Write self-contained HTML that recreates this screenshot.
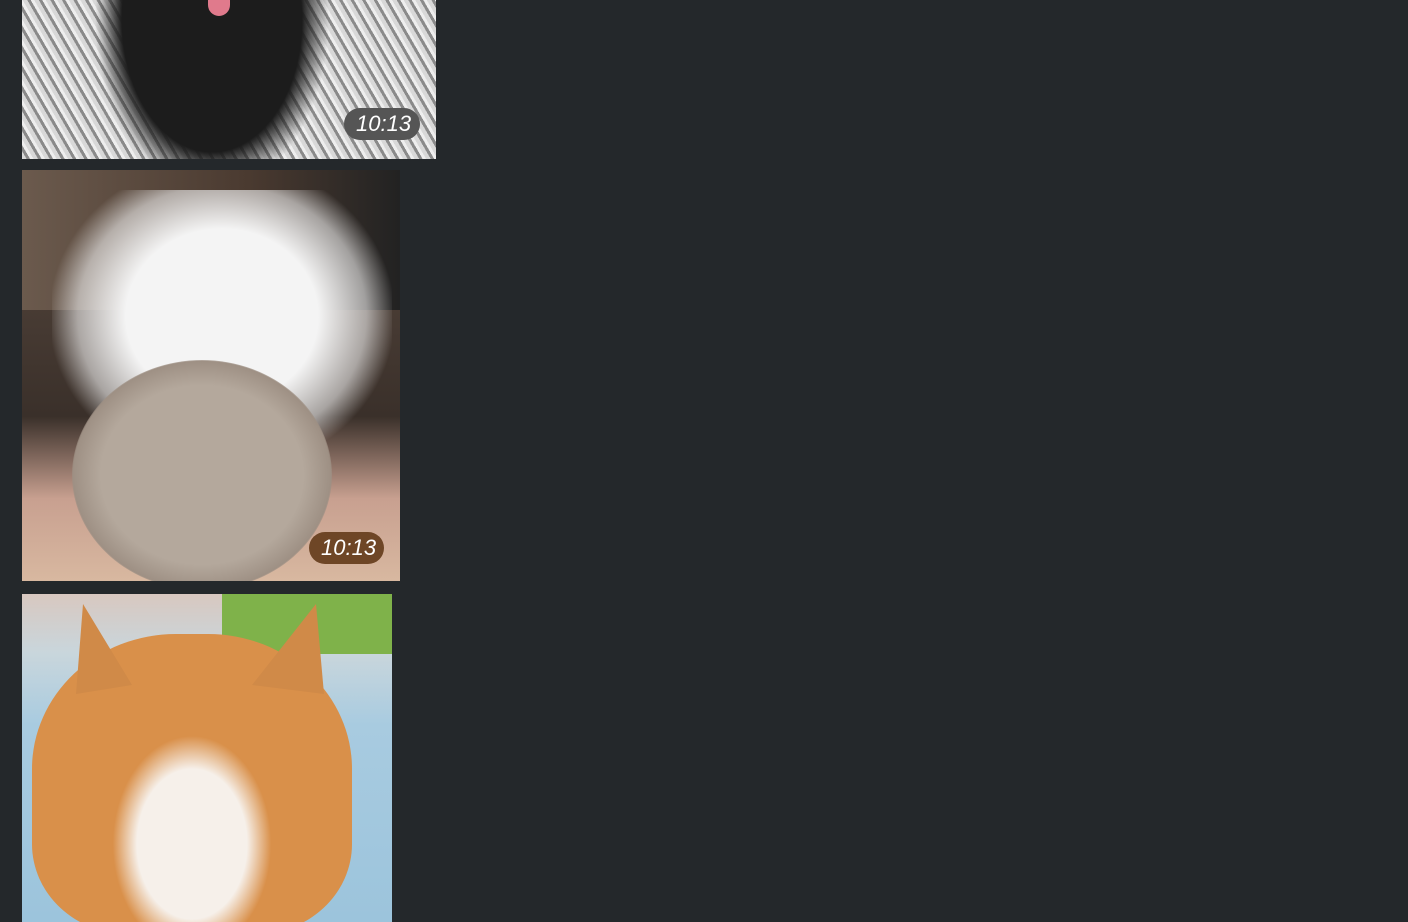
<!DOCTYPE html>
<html><head><meta charset="utf-8"><style>
body{margin:0;width:1408px;height:922px;overflow:hidden;background:#24282b;font-family:"Liberation Sans",sans-serif;position:relative}
.img{position:absolute;left:22px;overflow:hidden}
.t{position:absolute;height:32px;border-radius:16px;color:#fff;font-style:italic;font-size:22px;line-height:32px;padding:0 12px;box-sizing:border-box}
</style></head><body>
<div class="img" style="top:0;width:414px;height:159px;background:radial-gradient(ellipse 150px 220px at 190px 20px,#1c1c1c 60%,transparent 78%),repeating-linear-gradient(60deg,#d8d8d8 0 4px,#8a8a8a 4px 7px,#eee 7px 10px)">
<div style="position:absolute;left:186px;top:0;width:22px;height:16px;background:#e07a8c;border-radius:0 0 11px 11px"></div>
<div class="t" style="left:322px;top:108px;width:76px;background:#555">10:13</div></div>
<div class="img" style="top:170px;width:378px;height:411px;background:linear-gradient(180deg,#5a4a40 0%,#3a302a 60%,#c8a090 80%,#d8b8a0 100%)">
<div style="position:absolute;left:0;top:0;width:378px;height:140px;background:linear-gradient(90deg,#6b5a4d,#4a3a30 60%,#222)"></div>
<div style="position:absolute;left:30px;top:20px;width:340px;height:280px;background:radial-gradient(ellipse at 50% 45%,#f4f4f4 40%,rgba(240,240,240,.6) 60%,transparent 72%)"></div>
<div style="position:absolute;left:50px;top:190px;width:260px;height:230px;border-radius:50%;background:radial-gradient(ellipse,#b4a89c 55%,#9e9084 70%,transparent 72%)"></div>
<div class="t" style="left:287px;top:362px;width:75px;background:#6e4626">10:13</div></div>
<div class="img" style="top:594px;width:370px;height:328px;background:linear-gradient(180deg,#d8c8c0 0,#c9d6dc 18%,#a8cbe0 40%,#9cc4dc 100%)">
<div style="position:absolute;left:200px;top:0;width:170px;height:60px;background:#7fb24a"></div>
<div style="position:absolute;left:10px;top:40px;width:320px;height:300px;border-radius:45% 45% 30% 30%;background:radial-gradient(ellipse 110px 150px at 50% 70%,#f6f0ea 50%,transparent 72%),#d9904a"></div>
<div style="position:absolute;left:40px;top:10px;width:70px;height:90px;background:#d08a48;clip-path:polygon(20% 100%,30% 0,100% 90%)"></div>
<div style="position:absolute;left:230px;top:10px;width:80px;height:90px;background:#d08a48;clip-path:polygon(0 90%,80% 0,90% 100%)"></div>
</div>
</body></html>
